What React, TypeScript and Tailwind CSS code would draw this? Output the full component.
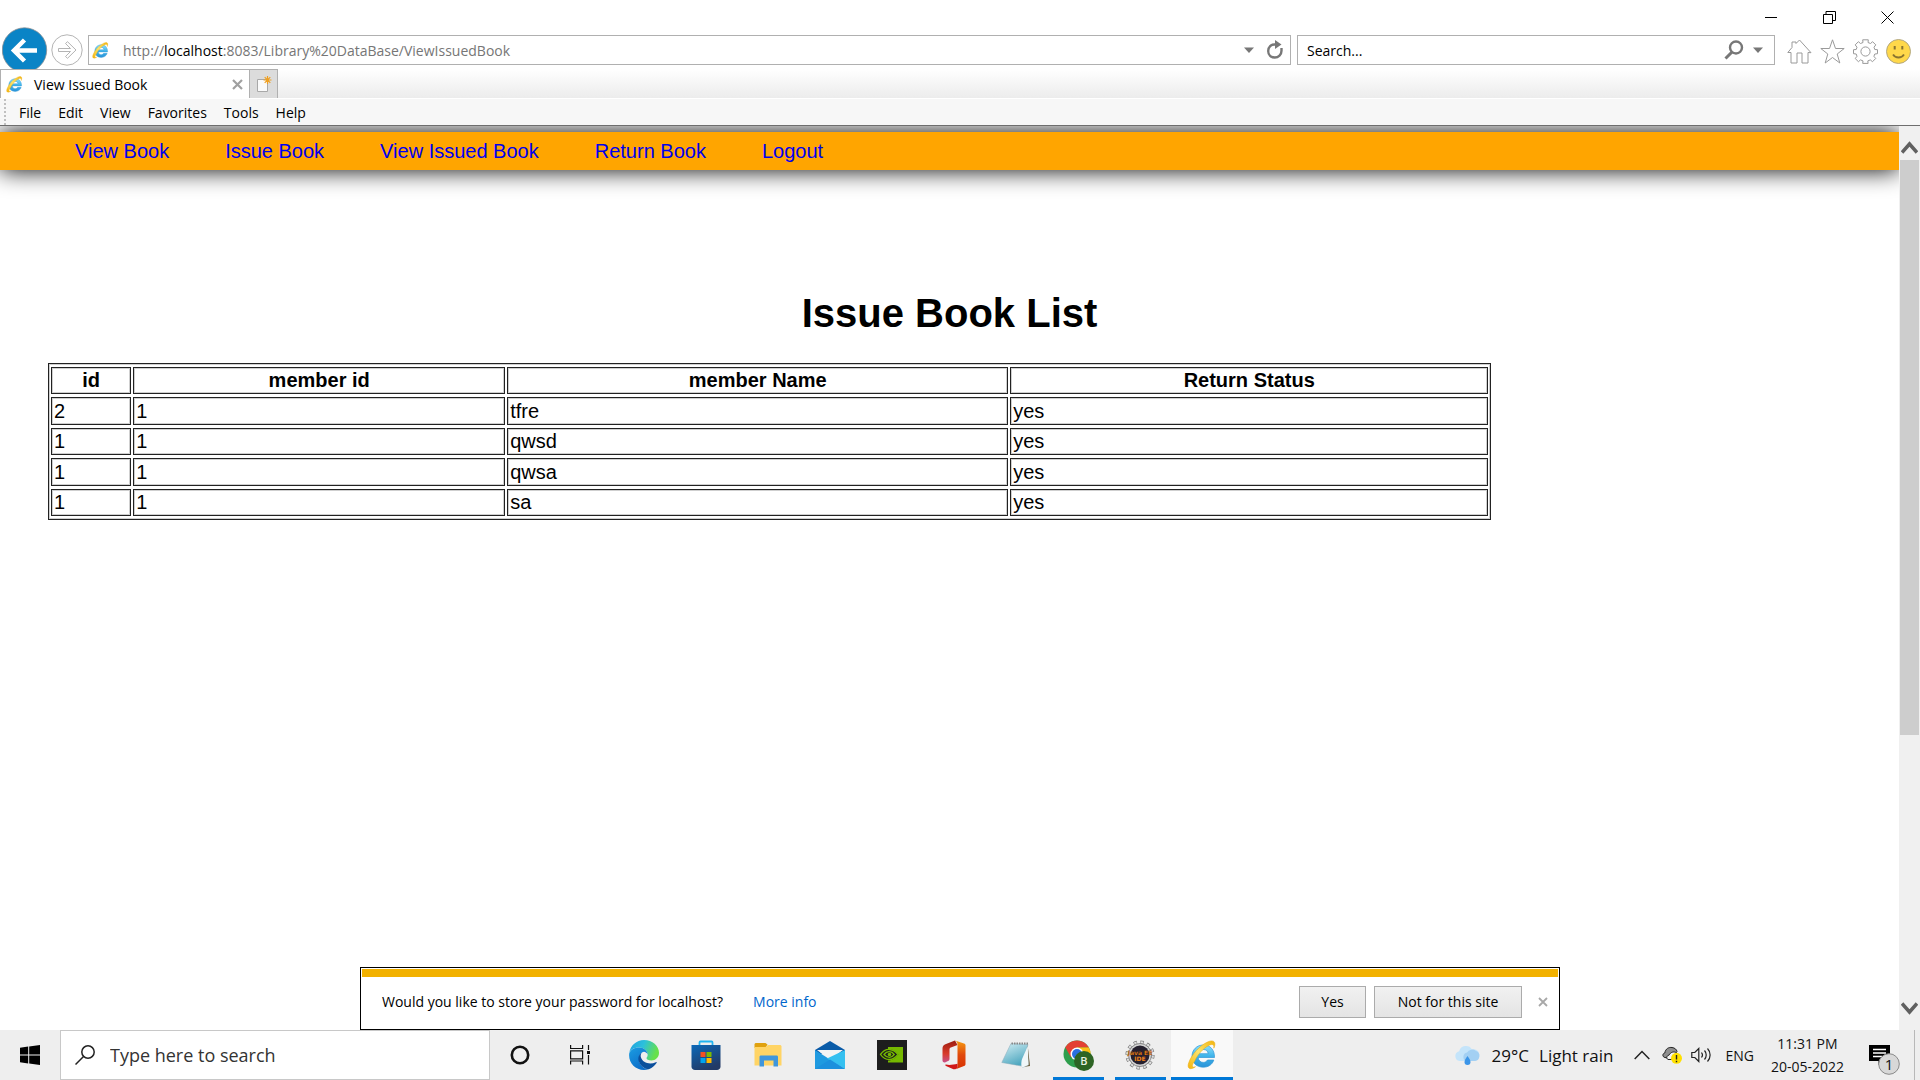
import React from "react";

const ui = "font-['Open_Sans','Noto_Sans',sans-serif]";
const arial = "font-['Liberation_Sans',Arial,sans-serif]";

function IeLogo({ className, id }: { className: string; id: string }) {
  return (
    <svg viewBox="0 0 30 30" className={className} aria-hidden="true">
      <defs>
        <linearGradient id={id + "b"} x1="0" y1="0" x2="0" y2="1">
          <stop offset="0" stopColor="#8fe0fb" />
          <stop offset="0.5" stopColor="#3fb4ea" />
          <stop offset="1" stopColor="#2a93d8" />
        </linearGradient>
        <linearGradient id={id + "y"} x1="0" y1="1" x2="1" y2="0">
          <stop offset="0" stopColor="#f5b50c" />
          <stop offset="0.5" stopColor="#fbe36c" />
          <stop offset="1" stopColor="#f3b40b" />
        </linearGradient>
      </defs>
      <path
        d="M27.5 17.5H11.2c.2 3 2.200 4.900 5 4.900 2 0 3.400-.8 4.300-2.400h6.300c-1.500 4.600-5.400 7.200-10.500 7.200C9.700 27.200 5 22.800 5 16.300S9.800 5 16.300 5c7 0 11.400 4.900 11.200 12.500zM11.300 13.700h9.900c-.3-2.600-2-4.200-4.800-4.200-2.800 0-4.600 1.600-5.100 4.200z"
        fill={`url(#${id}b)`}
        stroke="#2f97d6"
        strokeWidth="0.700"
      />
      <path
        d="M7.500 21.500C4 26 5 28 8.500 26.700c-5.200 3.800-9 2-6.700-4.200C4.500 14.500 13 5.500 20.500 2c4.500-2.100 8-1.300 7.300 3.200-.2 1-.5 2-1 3 .6-3.600-1.200-4.500-4.600-3C16.500 8 10.500 14.500 7.500 21.500z"
        fill={`url(#${id}y)`}
        stroke="#e8a909"
        strokeWidth="0.500"
      />
    </svg>
  );
}

function WindowControls() {
  const btn = "flex h-[35px] w-[58px] items-center justify-center";
  return (
    <div className="flex justify-end pr-1">
      <button aria-label="Minimize" className={btn}>
        <svg width="12" height="12" viewBox="0 0 12 12"><path d="M0 5.500h12" stroke="#000" /></svg>
      </button>
      <button aria-label="Restore" className={btn}>
        <svg width="13" height="13" viewBox="0 0 13 13" fill="none" stroke="#000">
          <path d="M.5 3.500h9v9h-9zM3 3V.5h9.500v9H10" />
        </svg>
      </button>
      <button aria-label="Close" className={btn}>
        <svg width="13" height="13" viewBox="0 0 13 13"><path d="M.5.5l12 12M12.500.5l-12 12" stroke="#000" /></svg>
      </button>
    </div>
  );
}

function AddressRow() {
  return (
    <div className="flex h-[34px] items-start">
      <div className="-mt-2 h-[42px] w-12 shrink-0 overflow-hidden">
        <button aria-label="Back" className="ml-0.5 block">
          <svg width="46" height="46" viewBox="0 0 46 46">
            <circle cx="22.500" cy="23" r="22.200" fill="#0a84c6" stroke="#8a8f94" strokeWidth="0.800" />
            <path d="M35 23.500H13M22.500 13L12 23.500 22.500 34" fill="none" stroke="#fff" strokeWidth="4.500" />
          </svg>
        </button>
      </div>
      <button aria-label="Forward" className="ml-[3px] -mt-px shrink-0">
        <svg width="32" height="32" viewBox="0 0 32 32" fill="none" stroke="#b4b4b4">
          <circle cx="16" cy="16" r="15.200" />
          <path d="M7.500 14.500h12l-5-5 2-1.800 8.500 8.300-8.500 8.300-2-1.800 5-5h-12z" />
        </svg>
      </button>
      <div className="ml-[5px] flex h-[30px] min-w-0 flex-1 items-center border border-[#b0b0b0] bg-white">
        <IeLogo id="addr" className="ml-[3px] size-[17px]" />
        <div className="ml-[14px] flex-1 pt-0.5 text-[14px] leading-5 text-[#767676]">
          http://<span className="text-black">localhost</span>:8083/Library%20DataBase/ViewIssuedBook
        </div>
        <button aria-label="Show address suggestions" className="mr-3">
          <svg width="10" height="6" viewBox="0 0 10 6"><path d="M0 .5h10L5 6z" fill="#777" /></svg>
        </button>
        <button aria-label="Refresh" className="mr-[6px]">
          <svg width="18" height="20" viewBox="0 0 18 20">
            <path d="M9.500 4.500C5 4 2.200 7 2.200 11s3 6.500 6.600 6.500 6.700-2.700 6.700-6.700V8" fill="none" stroke="#777" strokeWidth="2.400" />
            <path d="M9 0l6.500 4.500L9 9z" fill="#777" />
          </svg>
        </button>
      </div>
      <div className="ml-[6px] flex h-[30px] w-[478px] items-center border border-[#b0b0b0] bg-white">
        <input aria-label="Search" placeholder="Search..." className="ml-[9px] min-w-0 flex-1 pt-0.5 text-[14px] leading-5 outline-none placeholder:text-black" />
        <button aria-label="Run search" className="mr-[9px]">
          <svg width="20" height="20" viewBox="0 0 20 20" fill="none" stroke="#777">
            <circle cx="12" cy="7.500" r="6" strokeWidth="2.400" />
            <path d="M8 12L1.500 18.500" strokeWidth="3" />
          </svg>
        </button>
        <button aria-label="Search options" className="mr-[11px]">
          <svg width="10" height="6" viewBox="0 0 10 6"><path d="M0 .5h10L5 6z" fill="#777" /></svg>
        </button>
      </div>
      <div className="mr-[9px] ml-3 flex h-8 items-center gap-2">
        <button aria-label="Home">
          <svg width="25" height="25" viewBox="0 0 25 25" fill="none" stroke="#9a9a9a">
            <path d="M4 13.500v10.500h6v-10h5v10h6V13.500l3 .2L12.500 1 9 4.500V3H5v5.500L.8 13.500z" />
          </svg>
        </button>
        <button aria-label="Favorites">
          <svg width="25" height="25" viewBox="0 0 25 25" fill="none" stroke="#9a9a9a">
            <path d="M12.500.8l3 8.700h8.700l-7 5.500 2.600 9-7.300-5.500-7.300 5.500 2.600-9-7-5.500h8.700z" />
          </svg>
        </button>
        <button aria-label="Tools">
          <svg width="25" height="25" viewBox="0 0 25 25" fill="none" stroke="#9a9a9a">
            <path d="M10 3.500L9.700.8h5.600L15 3.500l2.500 1 2.100-1.800 3.200 3.200L21 8.200l.8 2.300 2.700.2v4l-2.700.3-.9 2.300 1.800 2.200-3.200 3.200-2.200-1.800-2.500 1 .3 2.500H9.700l.3-2.500-2.500-1-2.100 1.800-3.200-3.200L4 17.300 3.200 15l-2.700-.3v-4l2.700-.2L4 8.200 2.200 5.900l3.200-3.200 2.100 1.800z" />
            <circle cx="12.500" cy="12.500" r="4.600" />
          </svg>
        </button>
        <button aria-label="Send a smile">
          <svg width="25" height="25" viewBox="0 0 25 25">
            <circle cx="12.500" cy="12.500" r="12" fill="#ffd84a" stroke="#aaa080" strokeWidth="0.900" />
            <path d="M8.700 7v3.500M16.300 7v3.500" stroke="#8a7430" strokeWidth="2" />
            <path d="M7 15.500c2.500 4 8.500 4 11 0" fill="none" stroke="#8a7430" strokeWidth="1.800" />
          </svg>
        </button>
      </div>
    </div>
  );
}

function TabRow() {
  return (
    <div className="flex h-[29px] bg-linear-to-b from-white to-[#ececec]">
      <div className="flex w-[250px] items-center border-x border-t border-[#b0b0b0] bg-white">
        <IeLogo id="tab" className="ml-[5px] size-[17px]" />
        <span className="ml-[11px] flex-1 pt-0.5 text-[14px] leading-5">View Issued Book</span>
        <button aria-label="Close tab" className="mr-[6px]">
          <svg width="11" height="11" viewBox="0 0 11 11"><path d="M1 1l9 9M10 1l-9 9" stroke="#a0a0a0" strokeWidth="2.200" /></svg>
        </button>
      </div>
      <button aria-label="New tab" className="flex w-7 items-center justify-center border-t border-r border-[#b0b0b0] bg-[#dcdcdc]">
        <svg width="16" height="16" viewBox="0 0 16 16">
          <path d="M1.500 3.500h10v12h-10z" fill="#fafafa" stroke="#a8a8a8" />
          <path d="M11.500 0v8M7.500 4h8M8.700 1.200l5.600 5.600M14.300 1.200L8.700 6.800" stroke="#f0a020" strokeWidth="1.200" />
        </svg>
      </button>
    </div>
  );
}

function MenuBar() {
  const items = ["File", "Edit", "View", "Favorites", "Tools", "Help"];
  return (
    <div className="flex h-7 items-center border-t border-b border-t-white border-b-[#6e6e6e] bg-[#f7f7f7]">
      <div className="ml-1 h-full border-l-2 border-dotted border-[#c0c0c0]" />
      <nav aria-label="Menu bar" className="ml-[13px] flex gap-[17px] pt-0.5 text-[14px] leading-5">
        {items.map((t) => (
          <button key={t}>{t}</button>
        ))}
      </nav>
    </div>
  );
}

const rows = [
  ["2", "1", "tfre", "yes"],
  ["1", "1", "qwsd", "yes"],
  ["1", "1", "qwsa", "yes"],
  ["1", "1", "sa", "yes"],
];

function LibraryPage() {
  const cell = "border border-[#222] p-0 leading-6 shadow-[inset_0_0_0_1px_#cfcfcf]";
  return (
    <main className={"min-w-0 flex-1 overflow-hidden bg-white text-[20px] text-black " + arial}>
      <nav aria-label="Library" className="mt-1.5 flex h-[38px] items-center gap-14 bg-[#ffa500] pl-[75px] text-[#0000ee] shadow-[0_0_25px_#000]">
        <a href="#view-book">View Book</a>
        <a href="#issue-book">Issue Book</a>
        <a href="#view-issued">View Issued Book</a>
        <a href="#return-book">Return Book</a>
        <a href="#logout">Logout</a>
      </nav>
      <h1 className="mt-[119px] text-center text-[40px] leading-[48px] font-bold">Issue Book List</h1>
      <table className="mt-[26px] ml-12 w-[76%] table-fixed border-separate border-spacing-x-[2px] border-spacing-y-[3px] border border-[#222] shadow-[inset_0_0_0_1px_#cfcfcf]">
        <colgroup>
          <col className="w-[5.6%]" />
          <col className="w-[26%]" />
          <col className="w-[35%]" />
          <col />
        </colgroup>
        <thead>
          <tr className="h-[27px] align-top">
            {["id", "member id", "member Name", "Return Status"].map((h) => (
              <th key={h} scope="col" className={cell}>{h}</th>
            ))}
          </tr>
        </thead>
        <tbody>
          {rows.map((r, i) => (
            <tr key={i} className="h-[27px] align-top odd:h-[28px] odd:align-middle">
              {r.map((c, j) => (
                <td key={j} className={cell + " pl-0.5"}>{c}</td>
              ))}
            </tr>
          ))}
        </tbody>
      </table>
    </main>
  );
}

function Scrollbar() {
  return (
    <div className="flex w-[21px] shrink-0 flex-col items-center bg-[#f0f0f0]">
      <button aria-label="Scroll up" className="flex h-[34px] items-center pt-2">
        <svg width="17" height="13" viewBox="0 0 17 13"><path d="M1 11.500l7.500-8.500 7.500 8.500" fill="none" stroke="#606060" strokeWidth="3.500" /></svg>
      </button>
      <div className="flex w-[19px] flex-1 flex-col">
        <div className="h-[68.75%] bg-[#cdcdcd]" />
      </div>
      <button aria-label="Scroll down" className="flex h-[34px] items-center pb-2.5">
        <svg width="17" height="13" viewBox="0 0 17 13"><path d="M1 1.500L8.500 10 16 1.500" fill="none" stroke="#606060" strokeWidth="3.500" /></svg>
      </button>
    </div>
  );
}

function PasswordBar() {
  const btn = "h-8 border border-[#ababab] bg-linear-to-b from-[#f1f1f1] to-[#e4e4e4]";
  return (
    <section aria-label="Password prompt" className="absolute inset-x-0 bottom-0 mx-auto w-[62.5%] border border-black bg-white p-px text-[14px] leading-5">
      <div className="h-2 bg-[#f2b100]" />
      <div className="flex h-[51px] items-center pr-2.5 pb-px pl-5">
        <span>Would you like to store your password for localhost?</span>
        <a href="#more-info" className="ml-[30px] text-[#0066cc]">More info</a>
        <button className={btn + " ml-auto w-[67px]"}>Yes</button>
        <button className={btn + " ml-2 w-[148px]"}>Not for this site</button>
        <button aria-label="Dismiss" className="ml-4">
          <svg width="10" height="10" viewBox="0 0 10 10"><path d="M1 1l8 8M9 1L1 9" stroke="#a8a8a8" strokeWidth="1.800" /></svg>
        </button>
      </div>
    </section>
  );
}

const EdgeIcon = () => (
  <svg width="30" height="30" viewBox="0 0 30 30">
    <defs>
      <linearGradient id="eg1" x1="0" y1="0" x2="1" y2="0.300">
        <stop offset="0" stopColor="#1f9fe0" />
        <stop offset="0.500" stopColor="#2cc0dc" />
        <stop offset="1" stopColor="#66e14a" />
      </linearGradient>
      <linearGradient id="eg2" x1="0" y1="0" x2="0.600" y2="1">
        <stop offset="0" stopColor="#1b9de2" />
        <stop offset="1" stopColor="#0c6cc8" />
      </linearGradient>
    </defs>
    <path d="M.3 13C1.300 5.500 7.500 0 15 0c8.500 0 15 6 15 12.800 0 4.700-3.500 7.700-7.500 7.700-3.300 0-5-1.200-5-2.200 0-.8 1.200-1.300 1.200-3.700C18.700 11 15 7.500 10 7.500 5 7.500 1.500 9.700.3 13z" fill="url(#eg1)" />
    <path d="M.2 13.500C1.500 9.500 5.500 7.500 10 7.500c5 0 8.700 3.500 8.700 7.100-.8-2-2.500-2.800-3.700-2.800-2.700 0-5 4-5 7 0 5.500 4 10 9.500 10.400-1.400.6-3 .8-4.500.8C6 30-.8 22.500.2 13.500z" fill="url(#eg2)" />
    <path d="M12.500 13c-3 2-4 5.500-2.300 9.300C12 26.500 16 29.300 19.800 29.200c3-1 5.900-3.200 7.700-6.200.5-.8 0-1.200-.7-.8-6 3-13.500.5-14.900-4.900-.4-1.600-.2-3 .6-4.300z" fill="#0b4f9c" />
  </svg>
);

const StoreIcon = () => (
  <svg width="30" height="30" viewBox="0 0 30 30">
    <defs>
      <linearGradient id="st" x1="0" y1="0" x2="0.500" y2="1">
        <stop offset="0" stopColor="#0b68b8" />
        <stop offset="1" stopColor="#233a66" />
      </linearGradient>
    </defs>
    <path d="M8.500 6V2.500c0-.6.400-1 1-1h11c.6 0 1 .4 1 1V6" fill="none" stroke="#20b4f0" strokeWidth="1.800" />
    <path d="M.5 5h29v21.500c0 2-1.500 3.500-3.500 3.500H4C2 30 .5 28.500.5 26.500z" fill="url(#st)" />
    <path d="M9.500 12h5v5h-5z" fill="#f25022" />
    <path d="M15.500 12h5v5h-5z" fill="#7fba00" />
    <path d="M9.500 18h5v5h-5z" fill="#00a4ef" />
    <path d="M15.500 18h5v5h-5z" fill="#ffb900" />
  </svg>
);

const FolderIcon = () => (
  <svg width="28" height="24" viewBox="0 0 28 24">
    <path d="M1.500 0h10l2 1.500L11.500 5H.5V1z" fill="#e0a10e" />
    <path d="M.5 4h11l2.500-2h12.500l1 1v19.500h-27z" fill="#ffd465" />
    <path d="M5.500 14c0-1 .6-1.500 1.500-1.500h15.500c1 0 1.500.6 1.500 1.500v9.500h-4.500v-6h-9.500v6H5.500z" fill="#3f96dc" />
  </svg>
);

const MailIcon = () => (
  <svg width="30" height="28" viewBox="0 0 30 28">
    <path d="M0 9L15 0l15 9v4H0z" fill="#0a5ba8" />
    <path d="M2 9h26L15 19z" fill="#f4f4f4" />
    <path d="M0 9l30 19H0z" fill="#1f9ae0" />
    <path d="M30 9v19L12 17.500z" fill="#35c0f0" />
    <path d="M0 28h30L15 18.500z" fill="#1c90dd" />
  </svg>
);

const NvidiaIcon = () => (
  <svg width="30" height="30" viewBox="0 0 30 30">
    <path d="M0 0h30v30H0z" fill="#1d1d1d" />
    <path d="M11 7h15v15.500H11z" fill="#76b900" />
    <path d="M11 9c5 0 8 2.500 10.500 5.500C18.500 18 15.500 20.500 11 20.500z" fill="#1d1d1d" />
    <path d="M3.500 14.500C6 11 9 9.200 12.500 9.500c4 .2 6.500 2.500 8.500 5-2.500 3-5 5-8.500 5-4 0-7-2-9-5zM7 14.500c1.500-2 3.200-3 5.500-2.800 2 .1 3.500 1.200 4.700 2.800-1.300 1.600-2.700 2.800-4.700 2.800-2.300 0-4-1-5.500-2.800z" fill="none" stroke="#76b900" strokeWidth="1.300" />
    <circle cx="12.500" cy="14.500" r="1.800" fill="#76b900" />
  </svg>
);

const OfficeIcon = () => (
  <svg width="24" height="30" viewBox="0 0 24 30">
    <defs>
      <linearGradient id="of" x1="0" y1="0" x2="0" y2="1">
        <stop offset="0" stopColor="#9c1c10" />
        <stop offset="0.600" stopColor="#d83b2a" />
        <stop offset="1" stopColor="#c8508a" />
      </linearGradient>
      <linearGradient id="og" x1="0" y1="0" x2="0" y2="1">
        <stop offset="0" stopColor="#f59a10" />
        <stop offset="0.500" stopColor="#e0480c" />
        <stop offset="1" stopColor="#d83000" />
      </linearGradient>
    </defs>
    <path d="M13 .5L4 4C1.500 5 .5 6 .5 8.500v12c0 1.500 1.500 2.500 3 1.800l2.500-1.200c1-.5 1.500-1.100 1.500-2.300V9.500c0-1 .4-1.600 1.400-2L15.500 5z" fill="url(#of)" />
    <path d="M13 .5l9 3c1 .4 1.500 1 1.500 2v18.500c0 1-.5 1.600-1.500 2l-9 3.500c2-1 2.500-2 2.500-4V5c0-2-.5-3.500-2.500-4.500z" fill="url(#og)" />
    <path d="M4 24.500c3 .8 7 .3 11.500-.8V26c0 2.500-2 3.800-4 3.200L4 26c-1-.5-1-1.700 0-1.500z" fill="#d01818" />
  </svg>
);

const NotepadIcon = () => (
  <svg width="30" height="28" viewBox="0 0 30 28">
    <defs>
      <linearGradient id="np" x1="0" y1="0" x2="0.500" y2="1">
        <stop offset="0" stopColor="#d3eef4" />
        <stop offset="1" stopColor="#4fa8c0" />
      </linearGradient>
    </defs>
    <path d="M26.500 3l2.500 22-7 1z" fill="#6b5a38" />
    <path d="M26 3l1.500 21-6 2.500L20 20z" fill="#eef6f8" stroke="#9ab4bc" strokeWidth="0.500" />
    <path d="M10 2.500l17 1L20.500 25 .8 21.500z" fill="url(#np)" stroke="#8ab" strokeWidth="0.500" />
    <path d="M20.500 25c-.5-3 0-5.500.8-7.500L26.800 5l.5 18.500-5.800 3z" fill="#f0f7f9" />
    <path d="M10.500 2.500h17" stroke="#888" strokeWidth="2" strokeDasharray="1.500 1" />
  </svg>
);

const ChromeIcon = () => (
  <svg width="31" height="31" viewBox="0 0 31 31">
    <circle cx="14" cy="14" r="13.500" fill="#2e9e4c" />
    <path d="M14 7.200h11.700A13.500 13.500 0 0 1 14 27.500l5.800-10z" fill="#fbc016" />
    <path d="M2.300 7.200A13.500 13.500 0 0 1 25.700 7.200H14L8 17.500z" fill="#e34133" />
    <circle cx="14" cy="14" r="6.500" fill="#fff" />
    <circle cx="14" cy="14" r="5" fill="#2a6fe0" />
    <circle cx="21" cy="21" r="10" fill="#2d6425" />
    <text x="21" y="25" textAnchor="middle" fill="#e8f0e4" fontSize="11" fontWeight="600" fontFamily="Open Sans, sans-serif">B</text>
  </svg>
);

const EclipseIcon = () => (
  <svg width="30" height="30" viewBox="0 0 30 30">
    <circle cx="15" cy="15" r="12.800" fill="none" stroke="#777" strokeWidth="3.500" strokeDasharray="3.350 3.350" />
    <circle cx="15" cy="15" r="12.800" fill="none" stroke="#e2e2e2" strokeWidth="2.200" strokeDasharray="2.400 4.300" strokeDashoffset="-0.500" />
    <circle cx="15" cy="15" r="11.500" fill="#d4d4d4" stroke="#777" strokeWidth="0.800" />
    <circle cx="15" cy="15" r="9.500" fill="#25202e" />
    <text x="15" y="14.500" textAnchor="middle" fill="#f08418" stroke="#3a1c08" strokeWidth="0.200" fontSize="6" fontWeight="700" fontFamily="DejaVu Sans, sans-serif">Java EE</text>
    <text x="15" y="21" textAnchor="middle" fill="#f08418" fontSize="6" fontWeight="700" fontFamily="DejaVu Sans, sans-serif">IDE</text>
  </svg>
);

const apps = [
  { name: "Microsoft Edge", icon: <EdgeIcon />, state: "" },
  { name: "Microsoft Store", icon: <StoreIcon />, state: "" },
  { name: "File Explorer", icon: <FolderIcon />, state: "" },
  { name: "Mail", icon: <MailIcon />, state: "" },
  { name: "NVIDIA", icon: <NvidiaIcon />, state: "" },
  { name: "Office", icon: <OfficeIcon />, state: "" },
  { name: "Notepad", icon: <NotepadIcon />, state: "" },
  { name: "Chrome", icon: <ChromeIcon />, state: "open" },
  { name: "Eclipse", icon: <EclipseIcon />, state: "open" },
  { name: "Internet Explorer", icon: <IeLogo id="task" className="size-[30px]" />, state: "active" },
];

function Taskbar() {
  return (
    <footer className="flex h-[50px] shrink-0 items-stretch bg-[#eeeeee] text-[#111]">
      <button aria-label="Start" className="flex w-[60px] items-center justify-center">
        <svg width="20" height="20" viewBox="0 0 20 20">
          <path d="M0 2.800l8.200-1.200v7.900H0zM9.200 1.400L20 0v9.500H9.200zM0 10.500h8.200v7.900L0 17.200zM9.200 10.500H20V20L9.200 18.600z" />
        </svg>
      </button>
      <div className="flex w-[430px] items-center border border-[#c8c8c8] bg-white">
        <svg width="20" height="20" viewBox="0 0 20 20" fill="none" stroke="#222" strokeWidth="1.500" className="ml-[14px]">
          <circle cx="13" cy="7" r="6.200" />
          <path d="M8.500 11.500L.5 19.500" />
        </svg>
        <input aria-label="Search Windows" placeholder="Type here to search" className="ml-[15px] min-w-0 flex-1 text-[18px] leading-6 outline-none placeholder:text-[#333]" />
      </div>
      <button aria-label="Cortana" className="flex w-[60px] items-center justify-center">
        <svg width="20" height="20" viewBox="0 0 20 20"><circle cx="10" cy="10" r="8.200" fill="none" stroke="#111" strokeWidth="2.600" /></svg>
      </button>
      <button aria-label="Task view" className="mr-[3px] flex w-[60px] items-center justify-center">
        <svg width="20" height="20" viewBox="0 0 20 20" fill="none" stroke="#111" strokeWidth="1.200">
          <path d="M.6 0v3.500h12V0M.6 5.800h12v8H.6zM.6 19.500V16h12v3.500M18.500 0v5M18.500 10v9.500" />
          <path d="M17 6h3v3h-3z" fill="#111" stroke="none" />
        </svg>
      </button>
      {apps.map((a) => (
        <button key={a.name} aria-label={a.name} className={"flex w-[62px] flex-col items-center " + (a.state === "active" ? "bg-[#f9f9f9]" : "")}>
          <span className="flex flex-1 items-center pt-[3px]">{a.icon}</span>
          <span className={"h-[3px] " + (a.state === "active" ? "w-full bg-[#0078d7]" : a.state === "open" ? "w-[51px] bg-[#0078d7]" : "")} />
        </button>
      ))}
      <div className="ml-auto flex items-center text-[14px]">
        <button className="flex items-center pt-0.5 text-[17px] leading-6">
          <svg width="26" height="20" viewBox="0 0 26 20" className="mr-3">
            <path d="M5.500 15a5 5 0 0 1-.3-9.800A7 7 0 0 1 18 3.500a5.500 5.500 0 0 1 3 11.500z" fill="#c4e4fa" />
            <path d="M12 15a4.500 4.500 0 0 1 1-8.500 6 6 0 0 1 9-1.500 5.200 5.200 0 0 1-1 10z" fill="#a3d0f3" />
            <path d="M13.500 10c1.800 2.500 3 4.200 3 6a3 3 0 0 1-6 0c0-1.800 1.200-3.500 3-6z" fill="#3b95e8" />
          </svg>
          <span>29°C</span>
          <span className="ml-2.5">Light rain</span>
        </button>
        <button aria-label="Show hidden icons" className="ml-[21px]">
          <svg width="16" height="10" viewBox="0 0 16 10"><path d="M.7 9L8 1.500 15.300 9" fill="none" stroke="#222" strokeWidth="1.500" /></svg>
        </button>
        <button aria-label="OneDrive" className="ml-3">
          <svg width="20" height="18" viewBox="0 0 20 18">
            <path d="M3 11.500C.2 11 .2 7.500 2.800 7 3.500 2.500 7 1 10 1.500c3 .4 4.500 2 5 4l-6 7z" fill="#8f8f8f" stroke="#222" />
            <path d="M6 13.500C4 12.500 4.500 9.500 7 9.200 8.500 6 12 5 15 7l1 6.500z" fill="#f4f4f4" stroke="#222" />
            <circle cx="14.500" cy="12.300" r="5.500" fill="#ffe000" />
            <path d="M14.500 9v4.500M14.500 14.700v1.500" stroke="#222" strokeWidth="1.400" />
          </svg>
        </button>
        <button aria-label="Volume" className="ml-[9px]">
          <svg width="22" height="16" viewBox="0 0 22 16" fill="none" stroke="#222" strokeWidth="1.200">
            <path d="M.8 5.500v5h3l4 4v-13l-4 4zM10.500 5.500c1.200 1.500 1.200 3.500 0 5M13.500 3.500c2.300 2.500 2.300 6.500 0 9M16.500 1.500c3.500 3.700 3.500 9.300 0 13" />
          </svg>
        </button>
        <button aria-label="Input language" className="ml-3">ENG</button>
        <button className="ml-[17px] text-center leading-[23px]">
          <span className="block">11:31 PM</span>
          <span className="block">20-05-2022</span>
        </button>
        <button aria-label="Notifications" className="ml-[25px] self-end">
          <svg width="31" height="36" viewBox="0 0 31 36">
            <path d="M0 1h21v16h-7l-4.500 4v-4H0z" fill="#000" />
            <path d="M4 5.500h13M4 9h13M4 12.500h9" stroke="#fff" strokeWidth="1.400" />
            <circle cx="20" cy="20" r="10.300" fill="#d8d8d8" stroke="#8a8a8a" />
            <text x="20" y="25.500" textAnchor="middle" fontSize="15" fill="#111" fontFamily="Open Sans, sans-serif">1</text>
          </svg>
        </button>
      </div>
      <div className="ml-[14px] w-1.5 border-l border-[#b8b8b8]" />
    </footer>
  );
}

export default function App() {
  return (
    <div className={"flex h-screen flex-col overflow-hidden bg-white text-black " + ui}>
      <header>
        <WindowControls />
        <AddressRow />
        <TabRow />
        <MenuBar />
      </header>
      <div className="relative flex min-h-0 flex-1">
        <LibraryPage />
        <Scrollbar />
        <PasswordBar />
      </div>
      <Taskbar />
    </div>
  );
}
